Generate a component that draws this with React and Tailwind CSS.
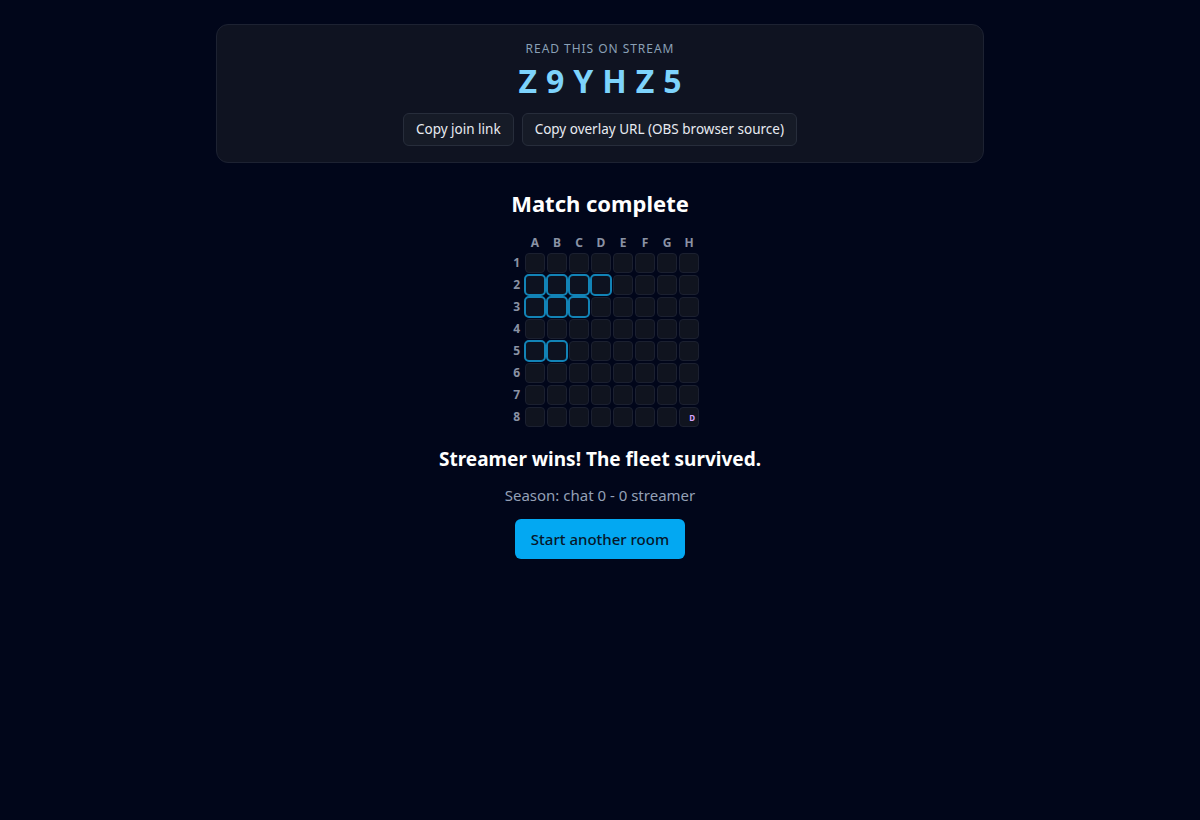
import React from "react"

const COLS = ["A", "B", "C", "D", "E", "F", "G", "H"]
const ROWS = [1, 2, 3, 4, 5, 6, 7, 8]

// cells the fleet still occupies at match end
const SHIPS = new Set(["A2", "B2", "C2", "D2", "A3", "B3", "C3", "A5", "B5"])
const MARKS = { H8: "D" }

const Cell = ({ id }) => {
  const ship = SHIPS.has(id)
  const mark = MARKS[id]
  if (ship) {
    return <div className="w-[22px] h-[22px] -m-[1px] rounded-[5px] border-2 border-[#1283b6] bg-[#0d1220]" />
  }
  return (
    <div className="w-5 h-5 rounded-[4px] border border-[#1b2030] bg-[#10141f] flex items-center justify-end pr-[3px]">
      {mark && <span className="text-[8px] leading-none font-bold text-[#d7a4ff] mt-[1px]">{mark}</span>}
    </div>
  )
}

const Board = () => (
  <div className="grid grid-cols-[22px_repeat(8,20px)] gap-[2px] mt-[18px]">
    <div className="h-4" />
    {COLS.map((c) => (
      <div key={c} className="h-4 flex items-center justify-center text-[12px] font-bold text-[#8a92a4]">
        {c}
      </div>
    ))}
    {ROWS.map((r) => (
      <React.Fragment key={r}>
        <div className="h-5 flex items-center justify-end pr-[3px] text-[12px] font-bold text-[#8a92a4]">{r}</div>
        {COLS.map((c) => (
          <Cell key={c + r} id={c + r} />
        ))}
      </React.Fragment>
    ))}
  </div>
)

export default function App() {
  return (
    <div
      className="min-h-screen bg-[#01061a] text-white pt-6 flex flex-col items-center"
      style={{ fontFamily: '"Noto Sans", "Open Sans", sans-serif' }}
    >
      <div className="w-[768px] rounded-xl border border-[#1d2232] bg-[#0f1321] pt-4 pb-4 flex flex-col items-center">
        <div className="text-[12px] leading-4 tracking-[0.08em] uppercase text-[#8aa0b6]">Read this on stream</div>
        <div className="mt-[2px] text-[32px] leading-[44px] font-bold tracking-[0.28em] pl-[0.28em] text-[#7dd3fc]">
          Z9YHZ5
        </div>
        <div className="mt-[10px] flex gap-2">
          <button className="h-[33px] px-3 rounded-md border border-[#272d3b] bg-[#161b27] text-[13.5px] text-[#e8ebf2]">
            Copy join link
          </button>
          <button className="h-[33px] px-3 rounded-md border border-[#272d3b] bg-[#161b27] text-[13.5px] text-[#e8ebf2]">
            Copy overlay URL (OBS browser source)
          </button>
        </div>
      </div>

      <h2 className="mt-[26px] text-[22px] leading-7 font-bold text-white">Match complete</h2>

      <Board />

      <div className="mt-[18px] text-[19px] leading-7 font-bold text-white">Streamer wins! The fleet survived.</div>
      <div className="mt-[12px] text-[15px] leading-5 text-[#94a0b6]">Season: chat 0 - 0 streamer</div>
      <button className="mt-[14px] h-[40px] px-4 rounded-md bg-[#03a8f2] text-[15px] font-medium text-[#06172a]">
        Start another room
      </button>
    </div>
  )
}
